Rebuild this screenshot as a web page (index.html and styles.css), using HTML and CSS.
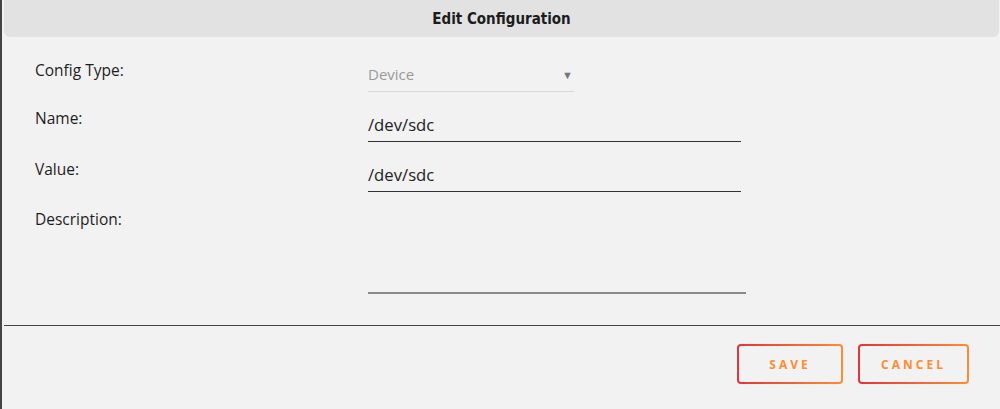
FILE: index.html
```html
<!DOCTYPE html>
<html lang="en">
<head>
    <meta charset="UTF-8">
    <meta name="viewport" content="width=device-width, initial-scale=1.0">
    <title>Edit Configuration</title>
    <link rel="stylesheet" href="styles.css">
</head>
<body>
    <div class="dialog">
        <!-- Title bar -->
        <div class="dialog-header">
            <h2>Edit Configuration</h2>
        </div>

        <!-- Form -->
        <form class="config-form">
            <div class="row row-type">
                <label for="configType">Config Type:</label>
                <div class="select-wrap">
                    <span class="select-value">Device</span>
                    <span class="select-arrow">&#9660;</span>
                </div>
            </div>
            <div class="row row-name">
                <label for="name">Name:</label>
                <input type="text" id="name" value="/dev/sdc">
            </div>
            <div class="row row-value">
                <label for="value">Value:</label>
                <input type="text" id="value" value="/dev/sdc">
            </div>
            <div class="row row-desc">
                <label for="description">Description:</label>
                <textarea id="description" rows="4"></textarea>
            </div>
        </form>

        <div class="dialog-footer">
            <button type="button" class="btn">SAVE</button>
            <button type="button" class="btn">CANCEL</button>
        </div>
    </div>
</body>
</html>
```

FILE: styles.css
```css
* {
    margin: 0;
    padding: 0;
    box-sizing: border-box;
}

body {
    background-color: #f2f2f2;
    font-family: "Open Sans", "Noto Sans", sans-serif;
    color: #222;
}

.dialog {
    height: 409px;
    border-left: 2px solid #444;
}

/* Header */
.dialog-header {
    margin-left: 2px;
    margin-right: 1px;
    height: 37px;
    background-color: #e2e2e2;
    border-radius: 0 0 6px 6px;
    display: flex;
    align-items: center;
    justify-content: center;
}

.dialog-header h2 {
    font-family: "DejaVu Sans", sans-serif;
    font-stretch: condensed;
    font-size: 15px;
    font-weight: bold;
    color: #1c1c1c;
}

/* Form rows */
.config-form {
    padding: 23px 0 0 33px;
    height: 288px;
}

.row {
    display: flex;
    align-items: flex-start;
}

.row label {
    width: 333px;
    font-size: 15.5px;
    line-height: 20px;
    color: #1e1e1e;
}

.row-type { height: 48px; }
.row-name { height: 51px; }
.row-value { height: 50px; }

.select-wrap {
    width: 206px;
    margin-top: 4px;
    padding: 0 0 7px 0;
    border-bottom: 1px solid #d8d8d8;
    display: flex;
    justify-content: space-between;
    align-items: center;
}

.select-value {
    font-size: 15px;
    line-height: 20px;
    color: #999;
}

.select-arrow {
    font-size: 11px;
    color: #777;
    padding-right: 1px;
}

.row input {
    width: 373px;
    margin-top: 7px;
    padding: 0 0 6px 0;
    border: none;
    border-bottom: 1px solid #333;
    background: transparent;
    font-family: "Open Sans", "Noto Sans", sans-serif;
    font-size: 16.7px;
    line-height: 20px;
    color: #222;
    outline: none;
}

.row-value input {
    margin-top: 6px;
}

.row textarea {
    width: 378px;
    height: 85px;
    border: none;
    border-bottom: 2px solid #8a8a8a;
    background: transparent;
    resize: none;
    outline: none;
    font-family: "Open Sans", "Noto Sans", sans-serif;
    font-size: 15px;
}

/* Footer */
.dialog-footer {
    margin-left: 2px;
    border-top: 1px solid #444;
    display: flex;
    justify-content: flex-end;
    gap: 15px;
    padding: 18px 31px 0 0;
}

.btn {
    height: 40px;
    padding: 0;
    border: 2px solid transparent;
    border-radius: 4px;
    background: linear-gradient(#f2f2f2, #f2f2f2) padding-box,
                linear-gradient(to right, #e5333a, #ff8c33) border-box;
    color: #ff8c33;
    font-family: "Open Sans", "Noto Sans", sans-serif;
    font-size: 12px;
    font-weight: bold;
    letter-spacing: 3px;
    cursor: pointer;
}

.btn:first-child { width: 106px; }
.btn:last-child { width: 111px; }
```
